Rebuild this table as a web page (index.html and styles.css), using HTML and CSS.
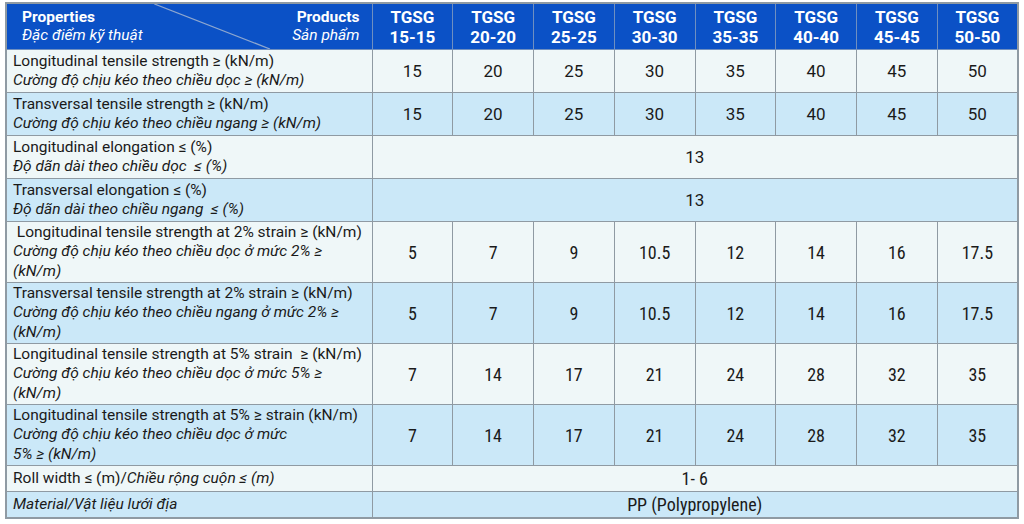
FILE: index.html
```html
<!DOCTYPE html>
<html lang="vi">
<head>
<meta charset="utf-8">
<link rel="stylesheet" href="styles.css">
</head>
<body>
<table class="spec">
  <colgroup>
    <col class="c-prop">
    <col class="c-val"><col class="c-val"><col class="c-val"><col class="c-val">
    <col class="c-val"><col class="c-val"><col class="c-val"><col class="c-val">
  </colgroup>
  <thead>
    <tr class="head">
      <th class="corner">
        <svg class="diag" viewBox="0 0 366 46" preserveAspectRatio="none"><line x1="148" y1="0" x2="264" y2="46"/></svg>
        <div class="corner-in">
          <div class="cl"><b>Properties</b><i>Đặc điểm kỹ thuật</i></div>
          <div class="cr"><b>Products</b><i>Sản phẩm</i></div>
        </div>
      </th>
      <th>TGSG<br>15-15</th>
      <th>TGSG<br>20-20</th>
      <th>TGSG<br>25-25</th>
      <th>TGSG<br>30-30</th>
      <th>TGSG<br>35-35</th>
      <th>TGSG<br>40-40</th>
      <th>TGSG<br>45-45</th>
      <th>TGSG<br>50-50</th>
    </tr>
  </thead>
  <tbody>
    <tr class="pale r2">
      <td class="p">Longitudinal tensile strength ≥ (kN/m)<br><i>Cường độ chịu kéo theo chiều dọc ≥ (kN/m)</i></td>
      <td>15</td><td>20</td><td>25</td><td>30</td><td>35</td><td>40</td><td>45</td><td>50</td>
    </tr>
    <tr class="blue r2">
      <td class="p">Transversal tensile strength ≥ (kN/m)<br><i>Cường độ chịu kéo theo chiều ngang ≥ (kN/m)</i></td>
      <td>15</td><td>20</td><td>25</td><td>30</td><td>35</td><td>40</td><td>45</td><td>50</td>
    </tr>
    <tr class="pale r2b">
      <td class="p">Longitudinal elongation ≤ (%)<br><i>Độ dãn dài theo chiều dọc&nbsp; ≤ (%)</i></td>
      <td colspan="8">13</td>
    </tr>
    <tr class="blue r2b">
      <td class="p">Transversal elongation ≤ (%)<br><i>Độ dãn dài theo chiều ngang&nbsp; ≤ (%)</i></td>
      <td colspan="8">13</td>
    </tr>
    <tr class="pale r3 cond">
      <td class="p">&nbsp;Longitudinal tensile strength at 2% strain ≥ (kN/m)<br><i>Cường độ chịu kéo theo chiều dọc ở mức 2% ≥<br>(kN/m)</i></td>
      <td>5</td><td>7</td><td>9</td><td>10.5</td><td>12</td><td>14</td><td>16</td><td>17.5</td>
    </tr>
    <tr class="blue r3 cond">
      <td class="p">Transversal tensile strength at 2% strain ≥ (kN/m)<br><i>Cường độ chịu kéo theo chiều ngang ở mức 2% ≥<br>(kN/m)</i></td>
      <td>5</td><td>7</td><td>9</td><td>10.5</td><td>12</td><td>14</td><td>16</td><td>17.5</td>
    </tr>
    <tr class="pale r3 cond">
      <td class="p">Longitudinal tensile strength at 5% strain&nbsp; ≥ (kN/m)<br><i>Cường độ chịu kéo theo chiều dọc ở mức 5% ≥<br>(kN/m)</i></td>
      <td>7</td><td>14</td><td>17</td><td>21</td><td>24</td><td>28</td><td>32</td><td>35</td>
    </tr>
    <tr class="blue r3 cond">
      <td class="p">Longitudinal tensile strength at 5% ≥ strain (kN/m)<br><i>Cường độ chịu kéo theo chiều dọc ở mức<br>5% ≥ (kN/m)</i></td>
      <td>7</td><td>14</td><td>17</td><td>21</td><td>24</td><td>28</td><td>32</td><td>35</td>
    </tr>
    <tr class="pale r1 cond">
      <td class="p">Roll width ≤ (m)/<i>Chiều rộng cuộn ≤ (m)</i></td>
      <td colspan="8">1- 6</td>
    </tr>
    <tr class="blue r1 cond">
      <td class="p"><i>Material/Vật liệu lưới địa</i></td>
      <td colspan="8">PP (Polypropylene)</td>
    </tr>
  </tbody>
</table>
</body>
</html>
```
FILE: styles.css
```css
html, body {
  margin: 0;
  padding: 0;
  background: #ffffff;
}
body {
  padding: 2px 0 0 5px;
  font-family: Roboto, "Noto Sans", "Liberation Sans", sans-serif;
  color: #1a1a1a;
}
.spec {
  border-collapse: collapse;
  width: 1012px;
  table-layout: fixed;
  border: 2px solid #8f9aa3;
}
.c-prop { width: 366px; }
.c-val { width: 80.75px; }

.spec th, .spec td {
  border: 1.5px solid #8f9aa3;
  padding: 0;
  text-align: center;
  vertical-align: middle;
}
.head th {
  background: #0b51c6;
  color: #ffffff;
  font-weight: 700;
  font-size: 17px;
  line-height: 20px;
  height: 45px;
  border-color: #6f8fc0;
}
.head th.corner {
  position: relative;
  text-align: left;
  font-size: 15.5px;
  line-height: 18px;
}
.diag {
  position: absolute;
  left: 0;
  top: 0;
  width: 100%;
  height: 100%;
}
.diag line {
  stroke: #8ea7cf;
  stroke-width: 1.3;
}
.corner-in {
  position: relative;
  display: flex;
  justify-content: space-between;
  padding: 0 12px 2px 15px;
}
.cl, .cr {
  display: flex;
  flex-direction: column;
}
.cr { text-align: right; }
.corner-in b { font-weight: 700; }
.corner-in i { font-weight: 400; font-style: italic; }

.pale td { background: #eff7f8; }
.blue td { background: #cbe8f8; }

.spec td {
  font-size: 17px;
  line-height: 19px;
}
.spec td.p {
  text-align: left;
  font-size: 15.5px;
  line-height: 19.5px;
  padding-left: 6px;
}
.r2 td { height: 42px; }
.r2b td { height: 42px; }
.r3 td { height: 60px; }
.r1 td { height: 25px; }

.cond td:not(.p) {
  font-family: "Roboto Condensed", Roboto, "Liberation Sans Narrow", sans-serif;
  font-stretch: condensed;
  font-size: 18px;
}
```
